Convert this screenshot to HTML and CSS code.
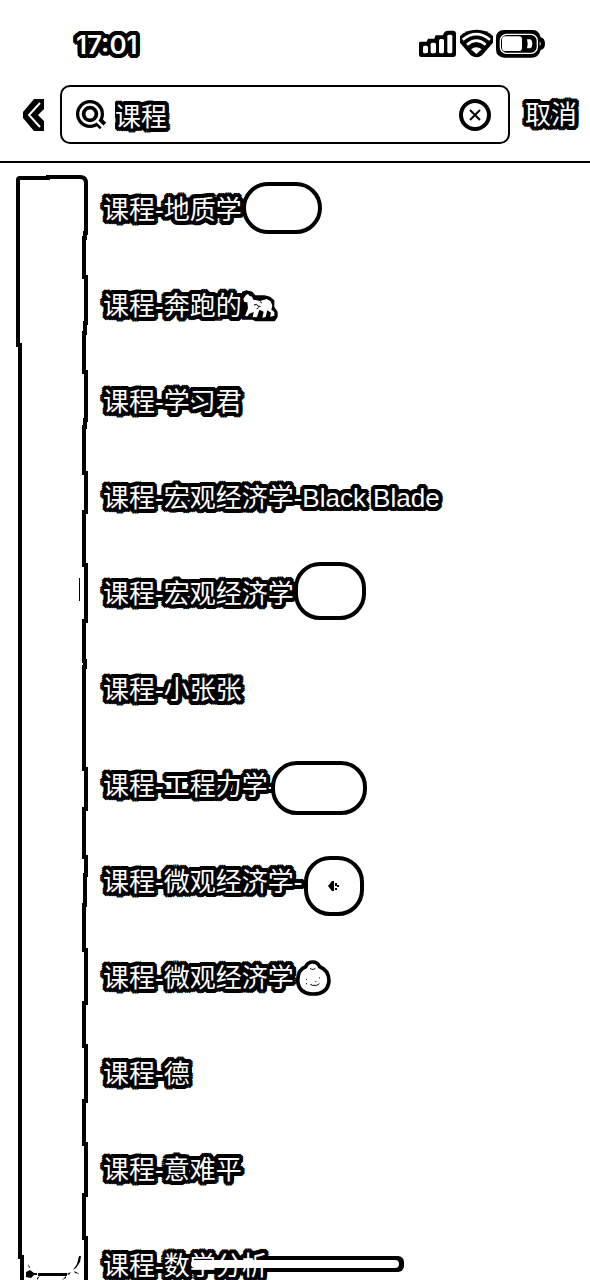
FILE: index.html
```
<!DOCTYPE html>
<html lang="zh-CN">
<head>
<meta charset="utf-8">
<meta name="viewport" content="width=device-width, initial-scale=1">
<title>搜索 课程</title>
<link rel="stylesheet" href="styles.css">
</head>
<body>
<div class="screen">
  <header class="top">
    <div class="status">
      <time class="clock outlined">17:01</time>
      <svg class="indicators" viewBox="84 57 384 90" aria-hidden="true">
        <path d="M87 99Q87 95 92 95H110L114 86H133L137 76H158L164 66Q168 62 176 62H190Q198 63 198 72V132Q198 141 189 141H92Q87 140 87 135Z"/>
        <g fill="#fff"><rect x="99" y="107" width="15" height="23" rx="5"/><rect x="122" y="98" width="16" height="32" rx="5"/><rect x="147" y="87" width="15" height="43" rx="5"/><rect x="172" y="74" width="15" height="56" rx="5"/></g>
        <path d="M210 78Q230 59 260 59T309 78V98L276 136Q269 142 260 142T242 136L210 98Z"/>
        <g fill="none" stroke="#fff" stroke-width="8"><path d="M218 89Q259 56 300 89"/><path d="M231 104Q259 80 287 104"/></g>
        <path d="M243 118Q259 105 275 118L259 132Z" fill="#fff"/>
        <path d="M342 60H430Q447 61 452 82Q465 85 465 101T452 120Q447 143 424 143H342Q318 141 318 118V84Q318 61 342 60Z"/>
        <rect x="331" y="73" width="111" height="57" rx="19" fill="none" stroke="#fff" stroke-width="4"/>
        <rect x="336" y="79" width="60" height="44" rx="10" fill="#fff"/>
        <path d="M411 88H421Q427 91 427 101T421 115H411Q415 101 411 88Z" fill="#fff"/>
        <path d="M449 94Q455 101 449 109Z" fill="#fff"/>
      </svg>
    </div>
    <form class="searchbar">
      <button class="back" type="button" aria-label="返回">
        <svg viewBox="0 0 21 32" aria-hidden="true"><path d="M11 0H21V10L15 16L21 22V32H11L0 19V13Z"/><path d="M17 4L6 16L17 28" fill="none" stroke="#fff" stroke-width="2"/></svg>
      </button>
      <label class="field">
        <svg class="lens" viewBox="0 0 32 32" aria-hidden="true"><circle cx="14" cy="15" r="14"/><path d="M19 19L27 27" stroke="#000" stroke-width="9"/><path d="M20 21L27 28" stroke="#fff" stroke-width="2.500"/><circle cx="14" cy="15" r="9.500" fill="none" stroke="#fff" stroke-width="2.500"/><circle cx="14" cy="15" r="4.500" fill="#fff"/></svg>
        <input class="query outlined" type="text" value="课程" aria-label="搜索">
        <button class="clear" type="button" aria-label="清除">
          <svg viewBox="0 0 32 32" aria-hidden="true"><circle cx="16" cy="16" r="14" fill="#fff" stroke="#000" stroke-width="4"/><path d="M11 11L21 21M21 11L11 21" stroke="#000" stroke-width="2"/></svg>
        </button>
      </label>
      <button class="cancel outlined" type="button">取消</button>
    </form>
  </header>
  <main class="results">
    <svg class="avatars" viewBox="0 0 100 1117" aria-hidden="true">
      <g fill="none" stroke="#000" stroke-width="4">
        <path d="M22 1117V1094H20V182H18V17Q18 15 20 15H48V14H80Q86 14 86 20V70H85V75H84V114H86V160H85V170H84V209H86V257H85V264H84V310H86V349H84V402H86V458H84V498H85V504H84V606H86V646H84V694H86V712H85V742H84V787H86V840H84V883H86V938H84V981H86V1032H84V1075H86V1117"/>
      </g>
      <path d="M79.500 415V438" stroke="#000" stroke-width="1"/>
      <path d="M26 1109L30 1107L34 1110H37V1112H34L31 1115L26 1114ZM28 1101L30 1104L29 1105ZM38 1110H67V1113H38ZM79 1093H81L80 1099L76 1105L73 1107L77 1101ZM67 1111L71 1109L69 1112ZM74 1108L80 1111L75 1110ZM64 1115L66 1113V1115L62 1117ZM37 1115L40 1113L37 1117Z"/>
    </svg>
    <ul class="list">
      <li class="row"><span class="outlined">课程-地质学</span><i class="pill pill-plain"></i></li>
      <li class="row"><span class="outlined">课程-奔跑的</span><svg class="goat" viewBox="732 393 108 96" aria-hidden="true"><path d="M728 400L745 394L763 398L772 409H800L816 413L829 424V444L839 458V474L830 487H772L764 482H728Z"/><path d="M736 420L744 408L750 405L754 410L762 413L766 422L786 426L806 420L818 427L823 440L820 452L829 459V470L816 473L819 461L808 454L803 474L793 476L797 458L784 452L777 474L764 475L767 459L754 464L748 472L741 471L750 448L748 430L739 429Z" fill="#fff"/><path d="M768 438L776 436L780 442H788M786 428L792 432M776 450L782 446" fill="none" stroke="#000" stroke-width="3"/></svg></li>
      <li class="row"><span class="outlined">课程-学习君</span></li>
      <li class="row"><span class="outlined">课程-宏观经济学-Black Blade</span></li>
      <li class="row"><span class="outlined">课程-宏观经济学</span><i class="pill pill-tall"></i></li>
      <li class="row"><span class="outlined">课程-小张张</span></li>
      <li class="row"><span class="outlined">课程-工程力学-</span><i class="pill pill-wide"></i></li>
      <li class="row"><span class="outlined">课程-微观经济学-</span><i class="pill pill-round"><svg viewBox="0 0 12 12" aria-hidden="true"><path d="M0 6L4 1H6V11H4ZM7 3H9V5H11V7H9V6H7ZM7 8H9V10H7Z"/></svg></i></li>
      <li class="row"><span class="outlined">课程-微观经济学</span><svg class="face" viewBox="222 657 114 114" aria-hidden="true"><path d="M257 680Q263 666 278 666T299 680Q327 690 327 723Q323 762 280 762T233 723Q233 688 257 680Z" fill="#fff" stroke="#000" stroke-width="11"/><path d="M270 685L275 688H281L286 685M271 733L277 736H290L298 731M258 718H261M258 731H261M297 714H300M286 725H289" fill="none" stroke="#000" stroke-width="3"/></svg></li>
      <li class="row"><span class="outlined">课程-德</span></li>
      <li class="row"><span class="outlined">课程-意难平</span></li>
      <li class="row"><span class="outlined">课程-数学分析</span></li>
    </ul>
  </main>
  <div class="home-edge"></div>
  <div class="home-bar"></div>
</div>
</body>
</html>
```
FILE: styles.css
```
* { box-sizing: border-box; }
body {
  margin: 0;
  background: #fff;
  color: #fff;
  font: 26px/36px "Liberation Sans", "Noto Sans CJK SC", sans-serif;
}
button { padding: 0; border: 0; background: none; color: inherit; font: inherit; }
svg { display: block; flex: none; }
.screen { position: relative; height: 100vh; display: flex; flex-direction: column; overflow: hidden; }
.outlined {
  color: #fff;
  text-shadow:
    -2px -4px #000, 0 -4px #000, 2px -4px #000,
    -3px -3px #000, 3px -3px #000,
    -4px -2px #000, -2px -2px #000, 0 -2px #000, 2px -2px #000, 4px -2px #000,
    -4px 0 #000, -2px 0 #000, 2px 0 #000, 4px 0 #000,
    -4px 2px #000, -2px 2px #000, 0 2px #000, 2px 2px #000, 4px 2px #000,
    -3px 3px #000, 3px 3px #000,
    -2px 4px #000, 0 4px #000, 2px 4px #000;
}
.top { flex: none; border-bottom: 2px solid #000; }
.status {
  height: 85px;
  padding: 27px 44px 0 76px;
  display: flex;
  justify-content: space-between;
  align-items: flex-start;
}
.clock { font-family: Inter, sans-serif; font-weight: 600; }
.indicators { width: 128px; height: 30px; margin-top: 2px; }
.searchbar { display: flex; align-items: center; padding: 0 13px 17px 23px; }
.back svg { width: 21px; height: 32px; }
.field {
  flex: 1;
  min-width: 0;
  height: 59px;
  margin: 0 15px 0 16px;
  padding: 0 17px 0 14px;
  display: flex;
  align-items: center;
  border: 2px solid #000;
  border-radius: 10px;
}
.lens { width: 32px; height: 32px; }
.query {
  flex: 1;
  min-width: 0;
  height: 44px;
  padding: 0 7px;
  border: 0;
  outline: 0;
  background: none;
  font: inherit;
}
.clear svg { width: 32px; height: 32px; }
.results { flex: 1; min-height: 0; display: flex; align-items: flex-start; overflow: hidden; position: relative; z-index: 1; }
.avatars { width: 100px; height: 1117px; }
.list { flex: 1; margin: 0; padding: 0 0 0 3px; list-style: none; }
.row { height: 96px; padding-bottom: 2px; display: flex; align-items: center; white-space: nowrap; }
.pill {
  width: 80px;
  height: 52px;
  display: grid;
  place-items: center;
  background: #fff;
  border: 4px solid #000;
  border-radius: 26px;
}
.pill-plain { margin-bottom: 4px; }
.pill-tall { width: 72px; height: 58px; margin-bottom: 6px; }
.pill-wide { width: 96px; height: 54px; margin: 4px 0 0 -5px; }
.pill-round { width: 60px; height: 60px; margin: 8px 0 0 2px; }
.pill-round svg { width: 12px; height: 12px; }
.goat { width: 36px; height: 32px; }
.face { width: 38px; height: 38px; }
.home-edge, .home-bar { position: absolute; left: 50%; transform: translateX(-50%); }
.home-edge { bottom: 8px; width: 218px; height: 16px; border-radius: 6px; background: #000; }
.home-bar { bottom: 12px; z-index: 2; width: 208px; height: 8px; border-radius: 4px; background: #fff; }
```
